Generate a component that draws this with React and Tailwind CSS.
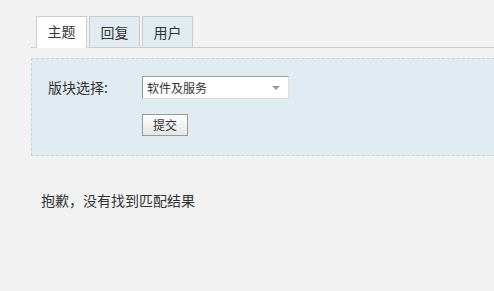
export default function App() {
  const tabs = ['主题', '回复', '用户'];

  return (
    <div className="min-h-screen w-full overflow-hidden bg-[#f2f2f2] text-[#333] font-['Noto_Sans_CJK_SC','Noto_Sans',sans-serif]">
      <div className="w-[540px] pl-[31px] pt-[16px]">
        {/* tabs */}
        <div className="flex h-[32px] border-b border-[#ccc] pl-[5px]">
          {tabs.map((t, i) => (
            <div
              key={t}
              className={
                i === 0
                  ? 'mr-[2px] -mb-px flex h-[32px] w-[51px] items-center justify-center border border-[#ccc] border-b-white bg-white pb-[1px] text-[14px]'
                  : 'mr-[2px] flex h-[31px] w-[51px] items-center justify-center border border-b-0 border-[#ccc] bg-[#e1ecf2] text-[14px]'
              }
            >
              {t}
            </div>
          ))}
        </div>

        {/* search panel */}
        <div className="mt-[10px] h-[98px] border border-dashed border-[#b9d6e6] bg-[#e1ecf2] pl-[16px] pt-[17px]">
          <div className="flex items-center">
            <div className="w-[94px] pb-[1px] text-[14px] leading-[20px]">版块选择:</div>
            <div className="flex h-[23px] w-[147px] items-center justify-between border border-[#ddd] border-l-[#999] border-t-[#999] bg-white pl-[4px] pr-[8px] text-[12px]">
              <span>软件及服务</span>
              <svg width="8" height="4" viewBox="0 0 8 4">
                <path d="M0 0h8L4 4z" fill="#999" />
              </svg>
            </div>
          </div>
          <div className="mt-[15px] pl-[94px]">
            <button className="flex h-[22px] w-[46px] items-center justify-center border border-[#999] bg-gradient-to-b from-white to-[#e6e6e6] text-[12px] text-[#333]">
              提交
            </button>
          </div>
        </div>

        {/* empty result */}
        <div className="mt-[34px] pl-[10px] text-[14px] leading-[20px]">抱歉，没有找到匹配结果</div>
      </div>
    </div>
  );
}
